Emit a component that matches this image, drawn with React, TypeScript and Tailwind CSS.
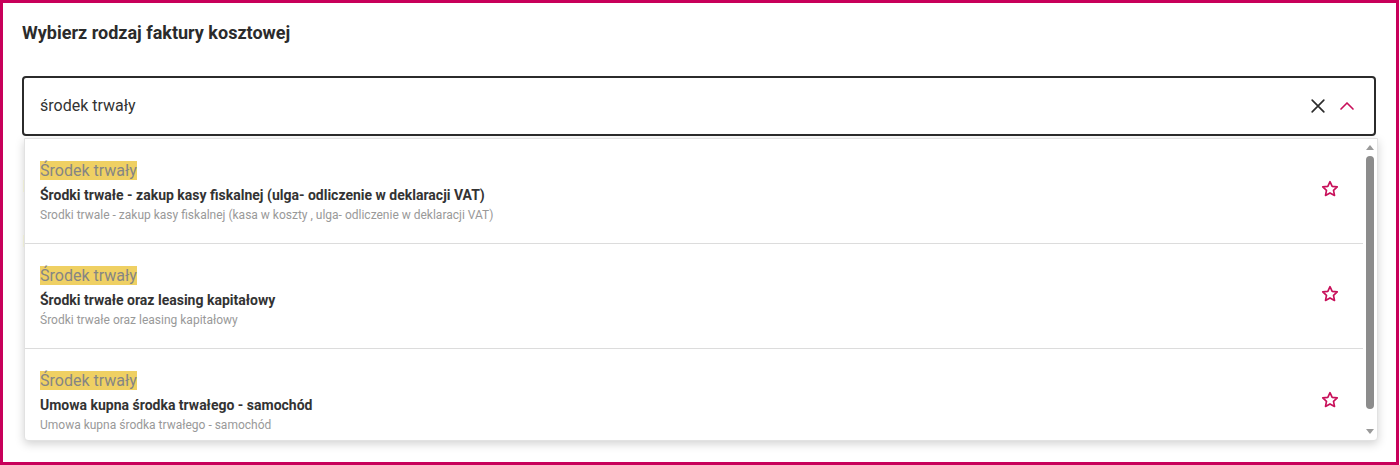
import React from "react";

const StarIcon = () => (
  <svg width="20" height="20" viewBox="0 0 24 24" fill="none" stroke="#c8105a" strokeWidth="2" strokeLinejoin="round">
    <path d="M12 3.2l2.6 5.6 6.1.7-4.5 4.2 1.2 6-5.4-3-5.4 3 1.2-6-4.5-4.2 6.1-.7z" />
  </svg>
);

const items = [
  {
    title: "Środki trwałe - zakup kasy fiskalnej (ulga- odliczenie w deklaracji VAT)",
    desc: "Srodki trwale - zakup kasy fiskalnej (kasa w koszty , ulga- odliczenie w deklaracji VAT)",
  },
  {
    title: "Środki trwałe oraz leasing kapitałowy",
    desc: "Środki trwałe oraz leasing kapitałowy",
  },
  {
    title: "Umowa kupna środka trwałego - samochód",
    desc: "Umowa kupna środka trwałego - samochód",
  },
];

export default function App() {
  return (
    <div
      className="w-[1399px] h-[465px] border-[3px] border-[#c8005a] bg-white overflow-hidden"
      style={{ fontFamily: "Roboto, 'Noto Sans', sans-serif" }}
    >
      <div className="pl-[19px] pr-[20px] pt-[19px]">
        <h1 className="text-[18px] leading-[22px] font-bold text-[#2b2b2b]">Wybierz rodzaj faktury kosztowej</h1>
        <div className="relative mt-[32px]">
          <div className="h-[60px] border-2 border-[#2b2b2b] rounded-[4px] flex items-center pl-[16px] pr-[18px] bg-white">
            <span className="flex-1 text-[16px] text-[#333]">środek trwały</span>
            <svg width="20" height="20" viewBox="0 0 24 24" fill="none" stroke="#2b2b2b" strokeWidth="2" strokeLinecap="round" className="mr-[10px]">
              <path d="M5 5l14 14M19 5L5 19" />
            </svg>
            <svg width="18" height="18" viewBox="0 0 24 24" fill="none" stroke="#c8105a" strokeWidth="2.2" strokeLinecap="round" strokeLinejoin="round">
              <path d="M4 16l8-8 8 8" />
            </svg>
          </div>
          <div className="pt-[41px] pl-[1px] text-[16px] text-[#333] leading-[20px]">
            <div>Rodzaj faktury</div>
            <div className="mt-[35px]">Rodzaj kosztu</div>
          </div>
          <div className="absolute left-[2px] top-[62px] w-[1354px] h-[303px] bg-white rounded-b-[4px] shadow-[0_3px_10px_rgba(0,0,0,0.18)] border border-[#e2e2e2] flex overflow-hidden">
            <div className="flex-1 flex flex-col">
              {items.map((it, i) => (
                <div
                  key={i}
                  className={`h-[105px] shrink-0 flex items-center pl-[15px] pr-[23px] ${i < 2 ? "border-b border-[#dcdcdc]" : ""}`}
                >
                  <div className="flex-1 mb-[1px]">
                    <span className="inline-block bg-[#efd063] text-[#858585] text-[16px] leading-[19px]">Środek trwały</span>
                    <div className="text-[14px] font-bold text-[#333] leading-[18px] mt-[3px]">{it.title}</div>
                    <div className="text-[12px] text-[#999] leading-[16px] mt-[3px]">{it.desc}</div>
                  </div>
                  <div className="-mt-[4px]">
                    <StarIcon />
                  </div>
                </div>
              ))}
            </div>
            <div className="w-[14px] flex flex-col items-center pt-[6px] pb-[6px]">
              <div className="w-0 h-0 border-l-[4px] border-r-[4px] border-b-[5px] border-l-transparent border-r-transparent border-b-[#9a9a9a]" />
              <div className="w-[8px] flex-1 mt-[6px] mb-[20px] bg-[#8c8c8c] rounded-full" />
              <div className="w-0 h-0 border-l-[4px] border-r-[4px] border-t-[5px] border-l-transparent border-r-transparent border-t-[#9a9a9a]" />
            </div>
          </div>
        </div>
      </div>
    </div>
  );
}
